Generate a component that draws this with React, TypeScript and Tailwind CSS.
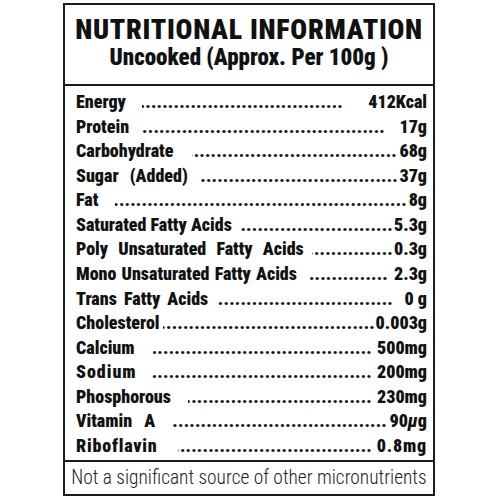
type Row = {
  label: string;
  labelCls: string;
  value: React.ReactNode;
  valueCls: string;
};

const rows: Row[] = [
  { label: "Energy", labelCls: "w-[66px]", value: "412Kcal", valueCls: "w-[84px]" },
  { label: "Protein", labelCls: "w-[66px]", value: "17g", valueCls: "w-[42px]" },
  { label: "Carbohydrate", labelCls: "w-[116px]", value: "68g", valueCls: "w-[30px]" },
  { label: "Sugar (Added)", labelCls: "w-[124px] [word-spacing:7px]", value: "37g", valueCls: "w-[29px]" },
  { label: "Fat", labelCls: "w-[39px]", value: "8g", valueCls: "w-[20px]" },
  { label: "Saturated Fatty Acids", labelCls: "w-[164px]", value: "5.3g", valueCls: "w-[34px]" },
  { label: "Poly Unsaturated Fatty Acids", labelCls: "w-[236px] [word-spacing:6px]", value: "0.3g", valueCls: "w-[34px]" },
  { label: "Mono Unsaturated Fatty Acids", labelCls: "w-[234px] [word-spacing:1px]", value: "2.3g", valueCls: "w-[39px]" },
  { label: "Trans Fatty Acids", labelCls: "w-[141px] [word-spacing:3px]", value: "0 g", valueCls: "w-[34px]" },
  { label: "Cholesterol", labelCls: "w-[87px]", value: "0.003g", valueCls: "w-[52px]" },
  { label: "Calcium", labelCls: "w-[77px]", value: "500mg", valueCls: "w-[55px]" },
  { label: "Sodium", labelCls: "w-[76px] tracking-[1px]", value: "200mg", valueCls: "w-[55px]" },
  { label: "Phosphorous", labelCls: "w-[112px]", value: "230mg", valueCls: "w-[55px]" },
  {
    label: "Vitamin A",
    labelCls: "w-[97px] [word-spacing:8px]",
    value: (
      <>
        90<span className="italic">μ</span>g
      </>
    ),
    valueCls: "w-[40px]",
  },
  { label: "Riboflavin", labelCls: "w-[102px] tracking-[0.8px]", value: "0.8mg", valueCls: "w-[55px] tracking-[0.8px]" },
];

const DOTS = ".".repeat(120);

export default function App() {
  return (
    <div className="w-[500px] h-[500px] bg-white pt-[3px] pl-[63px] font-['Roboto_Condensed',_'Roboto',_sans-serif] text-[#111]">
      <div className="w-[372px] h-[493px] border-2 border-[#1c1c1c] flex flex-col">
        <div className="h-[81px] border-b-2 border-[#1c1c1c] pt-[10px] flex flex-col items-center">
          <div className="text-[28px] leading-[30px] font-black tracking-[0.7px] whitespace-nowrap">NUTRITIONAL INFORMATION</div>
          <div className="text-[23px] leading-[26px] font-black whitespace-pre">Uncooked (Approx. Per 100g )</div>
        </div>
        <div className="h-[374px] pt-[4px] pl-[11px] pr-[6px] flex flex-col">
          {rows.map((r, i) => (
            <div key={i} className="flex items-baseline text-[18px] leading-[24.57px] font-black">
              <span className={`shrink-0 whitespace-pre ${r.labelCls}`}>{r.label}</span>
              <span className="flex-1 flex justify-end overflow-hidden">
                <span className="shrink-0 whitespace-nowrap tracking-[0.2px]">{DOTS}</span>
              </span>
              <span className={`shrink-0 text-right whitespace-pre ${r.valueCls}`}>{r.value}</span>
            </div>
          ))}
        </div>
        <div className="flex-1 border-t-2 border-[#1c1c1c] flex items-center justify-center">
          <span className="text-[19.4px] font-light whitespace-nowrap text-[#222]">
            Not a significant source of other micronutrients
          </span>
        </div>
      </div>
    </div>
  );
}
